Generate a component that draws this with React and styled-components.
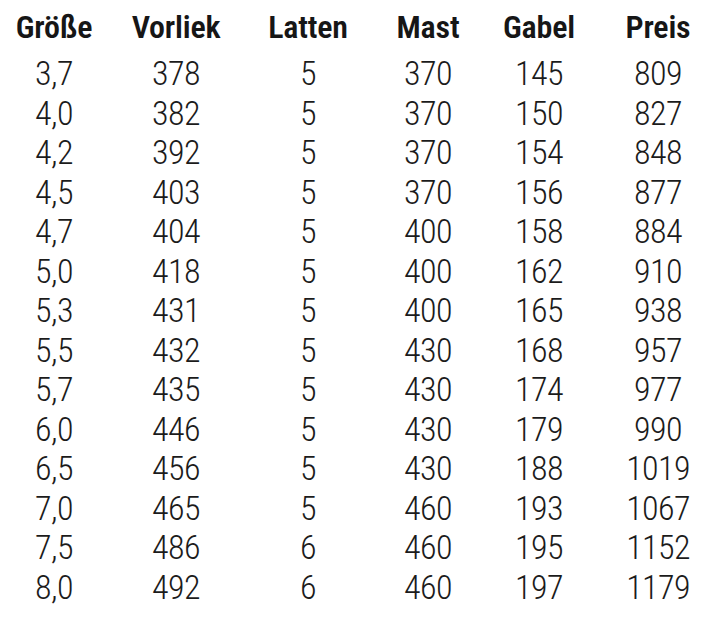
import styled, { createGlobalStyle } from 'styled-components';

const GlobalStyle = createGlobalStyle`
  html, body {
    margin: 0;
    padding: 0;
    background: #ffffff;
    overflow: hidden;
  }
`;

const Page = styled.div`
  width: 712px;
  height: 625px;
  padding-top: 7px;
  box-sizing: border-box;
  font-family: Roboto, "Liberation Sans", sans-serif;
  font-stretch: condensed;
  color: #1b1b1b;
`;

const Table = styled.div`
  display: grid;
  grid-template-columns: 108px 136px 128px 112px 110px 128px;
  grid-template-rows: 47px;
  grid-auto-rows: 39.5px;
  width: 722px;
`;

const HeadCell = styled.div`
  font-size: 32px;
  font-weight: 600;
  line-height: 40px;
  text-align: center;
  letter-spacing: -0.2px;
  color: #161616;
`;

const Cell = styled.div`
  font-size: 34px;
  font-weight: 300;
  line-height: 39.5px;
  text-align: center;
  letter-spacing: -0.6px;
`;

const columns = ['Größe', 'Vorliek', 'Latten', 'Mast', 'Gabel', 'Preis'];

const rows = [
  ['3,7', 378, 5, 370, 145, 809],
  ['4,0', 382, 5, 370, 150, 827],
  ['4,2', 392, 5, 370, 154, 848],
  ['4,5', 403, 5, 370, 156, 877],
  ['4,7', 404, 5, 400, 158, 884],
  ['5,0', 418, 5, 400, 162, 910],
  ['5,3', 431, 5, 400, 165, 938],
  ['5,5', 432, 5, 430, 168, 957],
  ['5,7', 435, 5, 430, 174, 977],
  ['6,0', 446, 5, 430, 179, 990],
  ['6,5', 456, 5, 430, 188, 1019],
  ['7,0', 465, 5, 460, 193, 1067],
  ['7,5', 486, 6, 460, 195, 1152],
  ['8,0', 492, 6, 460, 197, 1179]
];

function App() {
  return (
    <>
      <GlobalStyle />
      <Page>
        <Table>
          {columns.map(name => (
            <HeadCell key={name}>{name}</HeadCell>
          ))}
          {rows.map((row, i) =>
            row.map((value, j) => <Cell key={`${i}-${j}`}>{value}</Cell>)
          )}
        </Table>
      </Page>
    </>
  );
}

export default App;
